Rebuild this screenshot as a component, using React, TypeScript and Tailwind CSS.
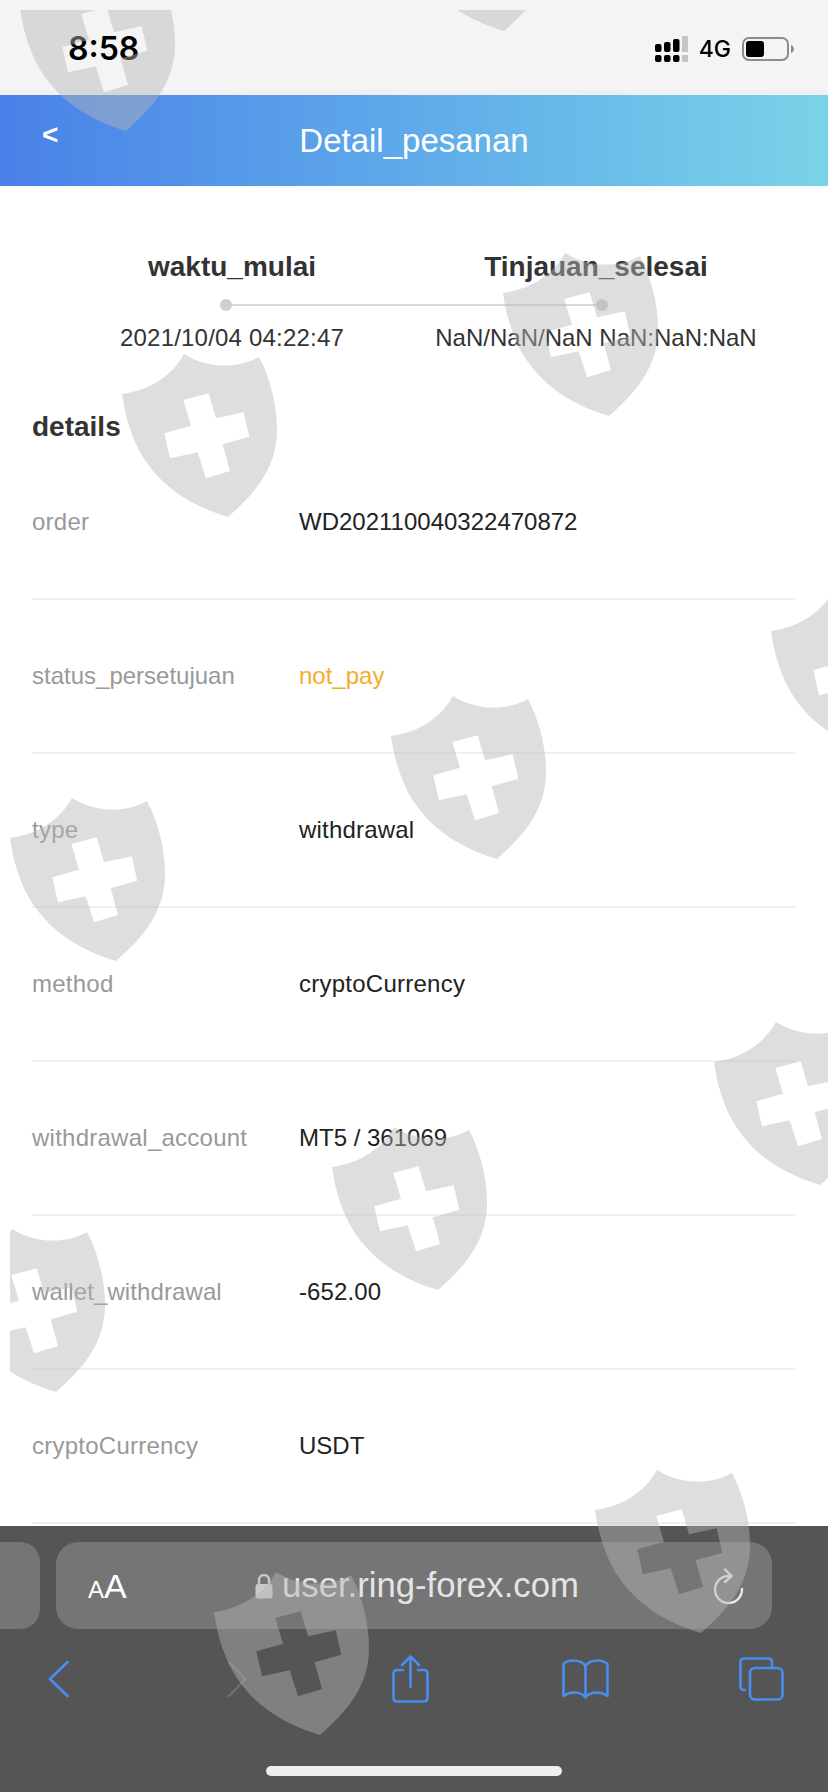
import React from "react";

const rows: [string, string, string, string][] = [
  ["order", "WD202110040322470872", "text-[#222222]", "tracking-[0.25px]"],
  ["status_persetujuan", "not_pay", "text-[#f3ad2d]", "tracking-normal"],
  ["type", "withdrawal", "text-[#222222] tracking-[0.2px]", "tracking-[0.25px]"],
  ["method", "cryptoCurrency", "text-[#222222] tracking-[0.25px]", "tracking-[0.25px]"],
  ["withdrawal_account", "MT5 / 361069", "text-[#222222]", "tracking-[0.25px]"],
  ["wallet_withdrawal", "-652.00", "text-[#222222] tracking-[0.1px]", "tracking-[0.1px]"],
  ["cryptoCurrency", "USDT", "text-[#222222]", "tracking-[0.25px]"],
];

const shields: [number, number][] = [
  [20, -32], [398, -132], [503, 253], [122, 354], [391, 696], [771, 591],
  [10, 798], [714, 1022], [332, 1127], [-50, 1229], [595, 1470], [214, 1572],
];

const SHIELD =
  "M62 0 C78 10 96 13 112 11 C121 10 130 7 137 3 C148 24 155 50 155 76 C155 115 132 140 106 163 C62 150 30 125 14 90 C6 72 2 55 0 40 C28 36 50 22 62 0 Z " +
  "M61.3 46 L86.7 39.3 L94 64.3 L121.7 58.3 L127.3 82.7 L100.7 90.3 L108 117 L84 124.3 L75.7 98.3 L48 104.3 L42.3 79.3 L69 71.7 Z";

function Watermarks() {
  return (
    <svg className="absolute left-0 top-0 pointer-events-none" width="828" height="1792" viewBox="0 0 828 1792">
      <defs>
        <clipPath id="wm">
          <rect x="10" y="10" width="818" height="1782" />
        </clipPath>
      </defs>
      <g clipPath="url(#wm)">
        {shields.map(([x, y], i) => (
          <path key={i} d={SHIELD} transform={`translate(${x} ${y})`} fill="#b5b5b5" fillOpacity="0.45" fillRule="evenodd" />
        ))}
      </g>
    </svg>
  );
}

function StatusIcons() {
  return (
    <div className="flex items-center">
      <svg width="33" height="26" viewBox="0 0 33 26" className="mr-[11px]">
        <g fill="#000">
          <rect x="0" y="8" width="6.5" height="8" rx="2" />
          <rect x="9" y="6" width="6.5" height="10" rx="2" />
          <rect x="18" y="3" width="6.5" height="13" rx="2" />
          <rect x="0" y="19" width="6.5" height="7" rx="2" />
          <rect x="9" y="19" width="6.5" height="7" rx="2" />
          <rect x="18" y="19" width="6.5" height="7" rx="2" />
        </g>
        <rect x="27" y="0" width="6" height="16" fill="#c4c4c4" />
        <rect x="27" y="19" width="6" height="7" fill="#c4c4c4" />
      </svg>
      <span className="text-[23px] leading-none text-black font-['Inter',sans-serif] font-medium mr-[11px]">4G</span>
      <svg width="52" height="24" viewBox="0 0 52 24">
        <rect x="1" y="1" width="45" height="22" rx="6" fill="none" stroke="#8c8c8c" strokeWidth="2" />
        <rect x="4" y="4" width="18" height="16" rx="3" fill="#000" />
        <path d="M49 8 C51 9 52 10.5 52 12 C52 13.5 51 15 49 16 Z" fill="#8c8c8c" />
      </svg>
    </div>
  );
}

function BottomIcons() {
  const blue = "#4a8df0";
  return (
    <div className="flex items-center pl-[48px] pt-[26px] h-[74px]">
      <svg width="21" height="38" viewBox="0 0 21 38" fill="none" stroke={blue} strokeWidth="2.6" strokeLinecap="round" strokeLinejoin="round">
        <path d="M19.5 2 L2 19 L19.5 36" />
      </svg>
      <svg width="20" height="38" viewBox="0 0 20 38" fill="none" stroke="#707070" strokeWidth="2.4" strokeLinecap="round" strokeLinejoin="round" className="ml-[158px]">
        <path d="M2 2 L18.5 19 L2 36" />
      </svg>
      <svg width="37" height="48" viewBox="0 0 37 48" fill="none" stroke={blue} strokeWidth="2.6" strokeLinecap="round" strokeLinejoin="round" className="ml-[145px]">
        <path d="M11 15 H5 Q1.5 15 1.5 19 V42.5 Q1.5 46.5 5 46.5 H32 Q35.5 46.5 35.5 42.5 V19 Q35.5 15 32 15 H26" />
        <path d="M18.5 32 V2 M10 10 L18.5 1.5 L27 10" />
      </svg>
      <svg width="47" height="40" viewBox="0 0 47 40" fill="none" stroke={blue} strokeWidth="2.6" strokeLinecap="round" strokeLinejoin="round" className="ml-[133px]">
        <path d="M23.5 7 C21 3 16 1.5 11 1.5 C7 1.5 3.5 3 1.5 5 V37 C5 34.5 8 33.5 12 33.5 C17 33.5 21 35 23.5 38.5 C26 35 30 33.5 35 33.5 C39 33.5 42 34.5 45.5 37 V5 C43.5 3 40 1.5 36 1.5 C31 1.5 26 3 23.5 7 Z" />
        <path d="M23.5 7 V36" />
      </svg>
      <svg width="45" height="44" viewBox="0 0 45 44" fill="none" stroke={blue} strokeWidth="2.6" strokeLinecap="round" strokeLinejoin="round" className="ml-[130px]">
        <path d="M6 33 H5 Q1.5 33 1.5 29.5 V5 Q1.5 1.5 5 1.5 H29 Q33 1.5 33 5 V11" />
        <rect x="11" y="11" width="32.5" height="31.5" rx="5" />
      </svg>
    </div>
  );
}

export default function App() {
  return (
    <div className="relative flex flex-col w-[828px] h-[1792px] overflow-hidden bg-white font-['Liberation_Sans',Arial,sans-serif]">
      <div className="flex items-center justify-between h-[95px] bg-[#f4f4f5] border-b-[5px] border-[#f0f0f3] pl-[68px] pr-[34px] pt-[8px]">
        <span className="text-[32px] leading-none font-semibold text-black font-['Inter',sans-serif]">8:58</span>
        <StatusIcons />
      </div>

      <div className="relative flex items-center justify-center h-[91px] bg-gradient-to-r from-[#4a80e8] to-[#7ad3e8] text-white">
        <span className="text-[33px] leading-none">Detail_pesanan</span>
        <span className="absolute left-[42px] top-[26px] text-[28px] leading-none font-bold">&lt;</span>
      </div>

      <div className="flex-1 min-h-0 overflow-hidden">
        <div className="grid grid-cols-2 px-[50px] pt-[65px] text-center">
          <div className="h-[32px] text-[28px] leading-[32px] font-bold text-[#333333]">waktu_mulai</div>
          <div className="h-[32px] text-[28px] leading-[32px] font-bold text-[#333333]">Tinjauan_selesai</div>
        </div>
        <div className="flex items-center ml-[220px] w-[388px] h-[12px] mt-[16px]">
          <span className="w-[12px] h-[12px] rounded-full bg-[#cfcfcf] shrink-0" />
          <span className="flex-1 h-[2px] bg-[#d9d9d9]" />
          <span className="w-[12px] h-[12px] rounded-full bg-[#cfcfcf] shrink-0" />
        </div>
        <div className="grid grid-cols-2 px-[50px] mt-[12px] text-center">
          <div className="h-[30px] text-[24px] leading-[30px] tracking-[0.2px] text-[#333]">2021/10/04 04:22:47</div>
          <div className="h-[30px] text-[24px] leading-[30px] text-[#333] whitespace-nowrap">NaN/NaN/NaN NaN:NaN:NaN</div>
        </div>
        <div className="mt-[56px] ml-[32px] h-[37px] text-[28px] leading-[36px] font-bold text-[#333]">details</div>
        <div className="mx-[32px]">
          {rows.map(([k, v, c, l]) => (
            <div key={k} className="flex items-center h-[154px] border-b-2 border-[#f0f0f0] text-[24px]">
              <span className={`w-[267px] text-[#999999] whitespace-nowrap ${l}`}>{k}</span>
              <span className={c}>{v}</span>
            </div>
          ))}
        </div>
      </div>

      <div className="h-[266px] bg-[#555555]">
        <div className="flex pt-[16px] gap-[16px]">
          <div className="w-[40px] h-[87px] rounded-r-[20px] bg-[#757575]" />
          <div className="flex items-center w-[716px] h-[87px] rounded-[22px] bg-[#757575] pl-[32px]">
            <span className="w-[40px] text-white leading-none whitespace-nowrap">
              <span className="text-[24px]">A</span>
              <span className="text-[34px]">A</span>
            </span>
            <svg width="18" height="26" viewBox="0 0 18 26" className="ml-[127px] mr-[9px]">
              <path d="M4 12 V7 a5 5 0 0 1 10 0 V12" fill="none" stroke="#c9c9cc" strokeWidth="2.4" />
              <rect x="0.5" y="11" width="17" height="14.5" rx="2.5" fill="#c9c9cc" />
            </svg>
            <span className="text-[34.7px] leading-none text-[#e4e4e4] whitespace-nowrap">user.ring-forex.com</span>
            <svg width="30" height="36" viewBox="0 0 30 36" fill="none" stroke="#e8e8e8" strokeWidth="2.4" strokeLinecap="round" strokeLinejoin="round" className="ml-[135px]">
              <path d="M28 21 A13.5 13.5 0 1 1 15 8" />
              <path d="M11 1.5 L17.5 8 L11 14" />
            </svg>
          </div>
        </div>
        <BottomIcons />
        <div className="w-[296px] h-[10px] mt-[63px] ml-[266px] rounded-full bg-[#eeeeee]" />
      </div>

      <Watermarks />
    </div>
  );
}
